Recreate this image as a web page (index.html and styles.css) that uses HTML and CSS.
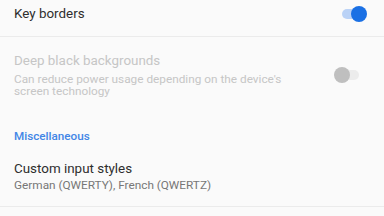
FILE: index.html
```html
<!DOCTYPE html>
<html lang="en">
<head>
    <meta charset="UTF-8">
    <meta name="viewport" content="width=device-width, initial-scale=1.0">
    <title>Settings</title>
    <link rel="stylesheet" href="styles.css">
</head>
<body>

<div class="settings">
    <div class="pref pref-first">
        <div class="pref-text">
            <div class="pref-title">Key borders</div>
        </div>
        <span class="switch on"></span>
    </div>

    <div class="pref pref-disabled">
        <div class="pref-text">
            <div class="pref-title">Deep black backgrounds</div>
            <div class="pref-summary">Can reduce power usage depending on the device's screen technology</div>
        </div>
        <span class="switch off"></span>
    </div>

    <div class="category">Miscellaneous</div>

    <div class="pref pref-last">
        <div class="pref-text">
            <div class="pref-title">Custom input styles</div>
            <div class="pref-summary">German (QWERTY), French (QWERTZ)</div>
        </div>
    </div>
</div>

</body>
</html>
```

FILE: styles.css
```css
body {
    margin: 0;
    background-color: #fafafa;
    font-family: 'Roboto', 'Noto Sans', sans-serif;
    width: 384px;
    height: 216px;
    overflow: hidden;
}

.pref {
    display: flex;
    align-items: center;
    padding: 0 0 0 14px;
}

.pref-text {
    width: 300px;
}

.pref-title {
    font-size: 13.4px;
    line-height: 16px;
    color: #2e2e2e;
}

.pref-summary {
    font-size: 11.8px;
    line-height: 12.5px;
    color: #777;
    margin-top: 4px;
}

.pref-first {
    padding-top: 6px;
    padding-bottom: 14px;
    border-bottom: 1px solid #ebebeb;
}

.pref-disabled {
    padding-top: 15.5px;
    padding-bottom: 14px;
}

.pref-disabled .pref-title,
.pref-disabled .pref-summary {
    color: #c6c6c6;
}

.category {
    margin-top: 18px;
    padding-left: 14px;
    font-size: 11.7px;
    line-height: 13px;
    font-weight: 500;
    color: #4286e6;
}

.pref-last {
    padding-top: 18px;
    padding-bottom: 15px;
    border-bottom: 1px solid #ebebeb;
}

.pref-last .pref-summary {
    margin-top: 2px;
}

.switch {
    position: relative;
    width: 26px;
    height: 16px;
    margin-left: auto;
}

.switch::before {
    content: '';
    position: absolute;
    left: 1px;
    right: 1px;
    top: 3px;
    height: 10px;
    border-radius: 5px;
}

.switch::after {
    content: '';
    position: absolute;
    top: 0;
    width: 16px;
    height: 16px;
    border-radius: 50%;
}

.switch.on {
    margin-right: 17px;
}

.switch.on::before {
    background-color: #bad2f6;
}

.switch.on::after {
    right: 0;
    background-color: #1a70e4;
}

.switch.off {
    margin-right: 24px;
}

.switch.off::before {
    background-color: #ececec;
}

.switch.off::after {
    left: 0;
    background-color: #bfbfbf;
}
```
